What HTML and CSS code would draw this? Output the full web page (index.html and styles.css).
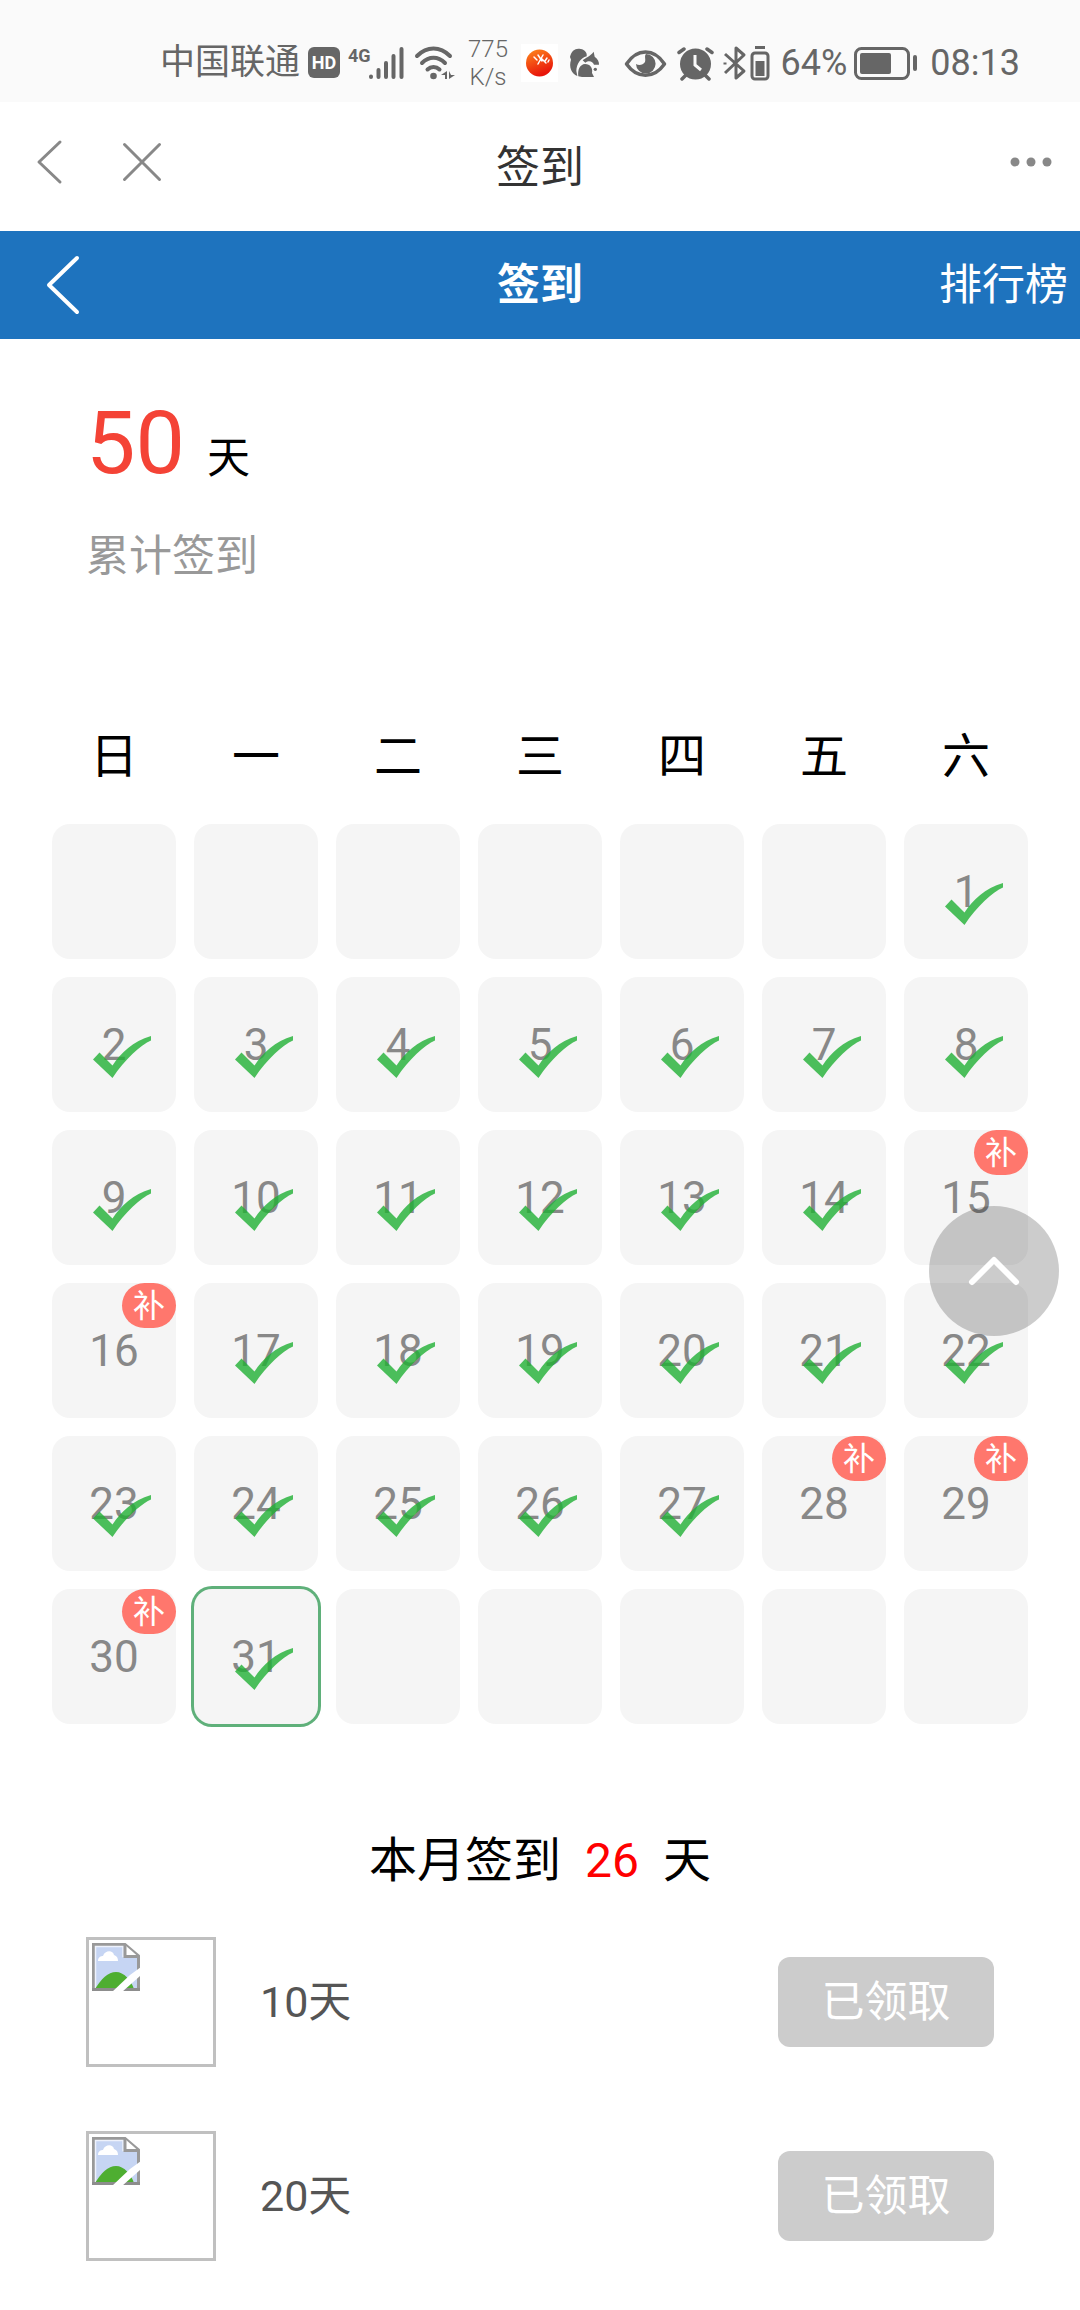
FILE: index.html
```html
<!DOCTYPE html>
<html lang="zh-CN">
<head>
<meta charset="utf-8">
<meta name="viewport" content="width=device-width, initial-scale=1">
<title>签到</title>
<link rel="stylesheet" href="styles.css">
</head>
<body>
<svg class="defs" aria-hidden="true">
  <symbol id="check" viewBox="0 0 58 42">
    <path d="M0 23.500 6.500 16.500 19.500 29.500C28 17 40 5 58 0V4.500C48 9 32 23 19.500 42Z" fill="#20b035" fill-opacity=".8"/>
  </symbol>
  <symbol id="broken-image" viewBox="0 0 48 48">
    <path d="M1.500 1.500H33L46.500 13V46.500H1.500Z" fill="#c6d5f3" stroke="#999" stroke-width="3"/>
    <path d="M3.500 45V3.500H31V13.500H45" fill="none" stroke="#eef2fc" stroke-width="1.500"/>
    <path d="M6 18C6 14 9 13 11 13C13 7 21 7 22 12C25 13 26 15 26 18Z" fill="#fff"/>
    <path d="M3 46C9 36 16 29 24 29C32 29 39 37 42 46Z" fill="#4eae31"/>
    <path d="M33 2V13.500H46" fill="#fff" stroke="#999" stroke-width="3"/>
    <path d="M0 46.500H48" stroke="#8d8d8d" stroke-width="3"/>
    <path d="M20 49 38 32 49 24V32L30 49Z" fill="#fff"/>
  </symbol>
</svg>

<div class="status-bar">
  <div class="status-group">
    <span class="carrier">中国联通</span>
    <svg width="32" height="32" viewBox="0 0 32 32" role="img" aria-label="HD"><rect width="32" height="31" rx="6" fill="#666"/><text x="16" y="22" text-anchor="middle" class="hd-text">HD</text></svg>
    <svg width="64" height="36" viewBox="0 0 64 36" role="img" aria-label="4G"><text x="4" y="17" class="net-text">4G</text><g stroke="#666" stroke-width="4" stroke-linecap="round"><path d="M27 31.500v.5M34.500 25v7M42 18v14M49.500 11v21M57.500 4v28"/></g></svg>
    <svg width="48" height="36" viewBox="0 0 48 36"><g fill="none" stroke="#666" stroke-width="4" stroke-linecap="round"><path d="M5 11C15 1 28 1 38 11M10 18C17 11 26 11 33 18M15.500 24.500C19 21 24 21 27.500 24.500"/></g><circle cx="21.500" cy="31" r="3.300" fill="#666"/><path d="M35 26v8h-2v-4h-4zM37 26v8l6-4h-4z" fill="#666"/></svg>
    <span class="speed">775<br>K/s</span>
    <svg width="48" height="40" viewBox="0 0 48 40"><defs><linearGradient id="sun" x1="0" y1="0" x2=".4" y2="1"><stop offset="0" stop-color="#ff8a1c"/><stop offset="1" stop-color="#e8150b"/></linearGradient></defs><rect x="5" y="1" width="37" height="38" fill="#fff"/><circle cx="23.500" cy="20" r="13.500" fill="url(#sun)"/><path d="M18 14l3 3M22 12l4 6M27 12l-5 9M31 15l-2 3M26 16l4 4M33 17l-1 2" fill="none" stroke="#fff" stroke-width="1.500" stroke-linecap="round"/></svg>
    <svg width="34" height="32" viewBox="24 80 102 96"><g fill="#666"><path d="M30 110C34 90 48 82 62 86C75 88 82 98 80 108C62 113 50 130 49 152L52 167C34 160 26 140 33 118Z"/><path d="M55 168C52 148 60 132 75 131C91 131 99 144 96 158L102 170H66Z"/><path d="M68 120C76 112 90 109 101 94L104 109C113 115 118 125 117 133H102C98 124 88 119 76 127Z"/><circle cx="106" cy="147" r="5"/></g></svg>
  </div>
  <div class="status-group">
    <svg width="48" height="36" viewBox="0 0 48 36"><path d="M4.500 19C15 3 32 3 42.500 19C32 34 15 34 4.500 19Z" fill="none" stroke="#666" stroke-width="3.500" stroke-linejoin="round"/><path d="M24 9A9.800 9.800 0 1 1 14 19C17 21 21 20 23 17C24 14 22 11 24 9Z" fill="#666"/></svg>
    <svg width="44" height="36" viewBox="0 0 44 36"><circle cx="21.500" cy="19" r="15.500" fill="#666"/><path d="M21 10v10l6 5" fill="none" stroke="#fafafa" stroke-width="3"/><path d="M5 7.500 10 4M38 7.500 33 4M8 34l5-5M35 34l-5-5" stroke="#666" stroke-width="3.500" stroke-linecap="round"/></svg>
    <svg width="52" height="36" viewBox="0 0 52 36"><path d="M3 9 22 26 14 33V3L22 10 3 28M3 17.500v2" fill="none" stroke="#666" stroke-width="3" stroke-linejoin="round"/><rect x="30" y="8" width="16" height="26" rx="3" fill="none" stroke="#666" stroke-width="3"/><path d="M33 2.500h10" stroke="#666" stroke-width="3"/><path d="M33.500 16h9v15h-9z" fill="#666"/></svg>
    <span class="percent">64%</span>
    <svg width="64" height="36" viewBox="0 0 64 36"><rect x="1.500" y="3.500" width="53" height="30" rx="6" fill="none" stroke="#666" stroke-width="3"/><rect x="6" y="8" width="31" height="21" rx="2" fill="#666"/><path d="M61 12v12" stroke="#666" stroke-width="4" stroke-linecap="round"/></svg>
    <time class="clock">08:13</time>
  </div>
</div>

<nav class="app-bar">
  <div class="app-actions">
    <button class="icon-button" type="button" aria-label="返回"><svg width="28" height="46" viewBox="0 0 28 46"><path d="M24 3 3 23 24 43" fill="none" stroke="#888" stroke-width="3" stroke-linecap="round" stroke-linejoin="round"/></svg></button>
    <button class="icon-button" type="button" aria-label="关闭"><svg width="40" height="40" viewBox="0 0 40 40"><path d="M2.500 2.500 37.500 37.500M37.500 2.500 2.500 37.500" stroke="#888" stroke-width="3" stroke-linecap="round"/></svg></button>
  </div>
  <div class="app-title">签到</div>
  <div class="app-actions app-actions-end">
    <button class="icon-button" type="button" aria-label="更多"><svg width="42" height="12" viewBox="0 0 42 12" fill="#888"><circle cx="5" cy="6" r="4.500"/><circle cx="21" cy="6" r="4.500"/><circle cx="37" cy="6" r="4.500"/></svg></button>
  </div>
</nav>

<header class="page-bar">
  <button class="icon-button page-back" type="button" aria-label="返回"><svg width="36" height="60" viewBox="0 0 36 60"><path d="M32 3 4 30 32 57" fill="none" stroke="#fff" stroke-width="4" stroke-linecap="round" stroke-linejoin="round"/></svg></button>
  <h1 class="page-title">签到</h1>
  <a class="rank-link" href="#rank">排行榜</a>
</header>

<main>
  <section class="summary">
    <p class="total"><span class="total-count">50</span><span>天</span></p>
    <p class="total-label">累计签到</p>
  </section>

  <table class="calendar">
    <thead>
      <tr><th scope="col">日</th><th scope="col">一</th><th scope="col">二</th><th scope="col">三</th><th scope="col">四</th><th scope="col">五</th><th scope="col">六</th></tr>
    </thead>
    <tbody>
      <tr><td></td><td></td><td></td><td></td><td></td><td></td><td>1<svg class="check"><use href="#check"/></svg></td></tr>
      <tr><td>2<svg class="check"><use href="#check"/></svg></td><td>3<svg class="check"><use href="#check"/></svg></td><td>4<svg class="check"><use href="#check"/></svg></td><td>5<svg class="check"><use href="#check"/></svg></td><td>6<svg class="check"><use href="#check"/></svg></td><td>7<svg class="check"><use href="#check"/></svg></td><td>8<svg class="check"><use href="#check"/></svg></td></tr>
      <tr><td>9<svg class="check"><use href="#check"/></svg></td><td>10<svg class="check"><use href="#check"/></svg></td><td>11<svg class="check"><use href="#check"/></svg></td><td>12<svg class="check"><use href="#check"/></svg></td><td>13<svg class="check"><use href="#check"/></svg></td><td>14<svg class="check"><use href="#check"/></svg></td><td>15<button class="makeup" type="button">补</button></td></tr>
      <tr><td>16<button class="makeup" type="button">补</button></td><td>17<svg class="check"><use href="#check"/></svg></td><td>18<svg class="check"><use href="#check"/></svg></td><td>19<svg class="check"><use href="#check"/></svg></td><td>20<svg class="check"><use href="#check"/></svg></td><td>21<svg class="check"><use href="#check"/></svg></td><td>22<svg class="check"><use href="#check"/></svg></td></tr>
      <tr><td>23<svg class="check"><use href="#check"/></svg></td><td>24<svg class="check"><use href="#check"/></svg></td><td>25<svg class="check"><use href="#check"/></svg></td><td>26<svg class="check"><use href="#check"/></svg></td><td>27<svg class="check"><use href="#check"/></svg></td><td>28<button class="makeup" type="button">补</button></td><td>29<button class="makeup" type="button">补</button></td></tr>
      <tr><td>30<button class="makeup" type="button">补</button></td><td class="today">31<svg class="check"><use href="#check"/></svg></td><td></td><td></td><td></td><td></td><td></td></tr>
    </tbody>
  </table>

  <p class="month-total"><span>本月签到</span><span class="month-count">26</span><span>天</span></p>

  <ul class="rewards">
    <li class="reward">
      <span class="reward-image"><svg width="48" height="48"><use href="#broken-image"/></svg></span>
      <span class="reward-name">10天</span>
      <button class="claim" type="button" disabled>已领取</button>
    </li>
    <li class="reward">
      <span class="reward-image"><svg width="48" height="48"><use href="#broken-image"/></svg></span>
      <span class="reward-name">20天</span>
      <button class="claim" type="button" disabled>已领取</button>
    </li>
  </ul>
</main>

<button class="to-top" type="button" aria-label="返回顶部"><svg width="52" height="30" viewBox="0 0 52 30"><path d="M4 26 26 4 48 26" fill="none" stroke="#fff" stroke-width="6" stroke-linecap="round" stroke-linejoin="round"/></svg></button>
</body>
</html>
```
FILE: styles.css
```css
* {
  box-sizing: border-box;
}

body {
  margin: 0;
  background: #fff;
  color: #000;
  font-family: Roboto, "Noto Sans CJK SC", sans-serif;
  line-height: 60px;
}

button {
  padding: 0;
  border: 0;
  font-family: inherit;
  line-height: inherit;
}

svg {
  display: block;
  flex: none;
}

p,
h1,
ul {
  margin: 0;
  padding: 0;
}

.defs {
  position: absolute;
  width: 0;
  height: 0;
}

/* Phone status bar */
.status-bar {
  display: flex;
  justify-content: space-between;
  height: 102px;
  padding: 24px 60px 0 160px;
  background: #fafafa;
  color: #666;
  font-size: 36px;
}

.status-group {
  display: flex;
  align-items: center;
  gap: 4px;
}

.carrier {
  width: 144px;
  font-size: 35px;
  white-space: nowrap;
}

.hd-text {
  fill: #fff;
  font-size: 18px;
  font-weight: 700;
}

.net-text {
  fill: #666;
  font-size: 18px;
  font-weight: 700;
}

.speed {
  width: 48px;
  font-size: 24px;
  font-weight: 300;
  line-height: 28px;
  text-align: center;
}

.percent {
  width: 72px;
  text-align: center;
}

.clock {
  width: 98px;
  text-align: right;
}

/* Container app bar */
.app-bar {
  display: grid;
  grid-template-columns: 1fr auto 1fr;
  align-items: center;
  padding: 36px 0 33px;
}

.app-actions {
  display: flex;
  align-items: center;
  gap: 58px;
  padding: 0 28px 12px 36px;
}

.app-actions-end {
  justify-content: flex-end;
}

.app-title {
  color: #333;
  font-size: 44px;
}

.icon-button {
  background: none;
}

/* Page bar */
.page-bar {
  display: grid;
  grid-template-columns: 1fr auto 1fr;
  align-items: center;
  padding: 24px 0;
  background: #1e73be;
  color: #fff;
}

.page-back {
  justify-self: start;
  margin-left: 45px;
}

.page-title {
  font-size: 43px;
  font-weight: 700;
}

.rank-link {
  justify-self: end;
  margin-right: 12px;
  color: inherit;
  font-size: 43px;
  text-decoration: none;
}

/* Totals */
.summary {
  padding: 60px 86px 0;
}

.total {
  display: flex;
  align-items: baseline;
  gap: 22px;
  font-size: 43px;
  line-height: 48px;
}

.total-count {
  color: #f44336;
  font-size: 88px;
  line-height: 88px;
}

.total-label {
  margin-top: 39px;
  color: #999;
  font-size: 43px;
  line-height: 60px;
}

/* Calendar */
.calendar {
  width: calc(100% - 68px);
  margin: 104px 34px 0;
  border-spacing: 18px;
  table-layout: fixed;
}

.calendar th {
  height: 98px;
  padding: 0;
  font-size: 48px;
  font-weight: 400;
}

.calendar td {
  position: relative;
  height: 135px;
  padding: 0;
  border-radius: 18px;
  background: #f5f5f5;
  color: #888;
  font-size: 44px;
  text-align: center;
}

.calendar .today {
  box-shadow: 0 0 0 3px #5fb07a;
}

.check {
  position: absolute;
  top: 59px;
  left: 33%;
  width: 58px;
  height: 42px;
}

.makeup {
  position: absolute;
  top: 0;
  right: 0;
  width: 54px;
  height: 45px;
  border-radius: 23px;
  background: #ff776d;
  color: #fff;
  font-size: 32px;
  line-height: 42px;
}

.month-total {
  display: flex;
  justify-content: center;
  gap: 24px;
  margin-top: 83px;
  font-size: 48px;
  line-height: 72px;
}

.month-count {
  color: #f00;
}

/* Rewards */
.rewards {
  display: grid;
  gap: 64px;
  padding: 40px 86px 48px;
  list-style: none;
}

.reward {
  display: flex;
  align-items: center;
  gap: 44px;
}

.reward-image {
  width: 130px;
  height: 130px;
  padding: 3px;
  border: 3px solid #c0c0c0;
}

.reward-name {
  flex: 1;
  color: #555;
  font-size: 43px;
}

.claim {
  width: 216px;
  height: 90px;
  border-radius: 12px;
  background: #ccc;
  color: #fff;
  font-size: 43px;
}

/* Floating scroll-to-top control */
.to-top {
  position: fixed;
  top: 1206px;
  right: 21px;
  display: grid;
  place-items: center;
  width: 130px;
  height: 130px;
  border-radius: 50%;
  background: rgba(0, 0, 0, .2);
}
```
